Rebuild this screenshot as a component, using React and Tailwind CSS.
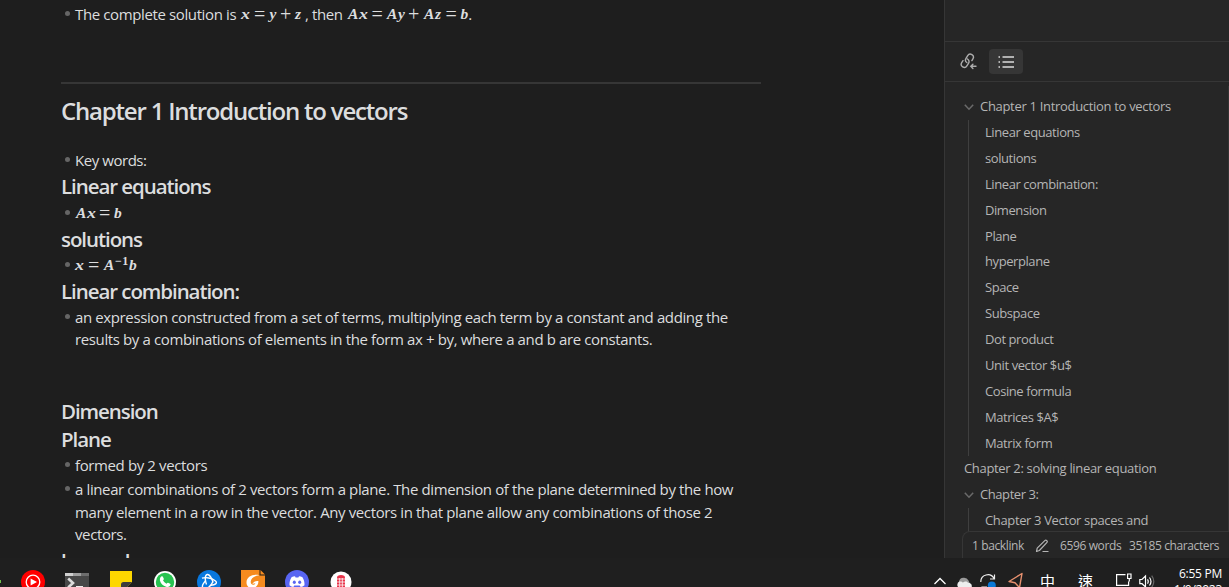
import React from "react";

const outline = [
  "Linear equations", "solutions", "Linear combination:", "Dimension", "Plane", "hyperplane", "Space",
  "Subspace", "Dot product", "Unit vector $u$", "Cosine formula", "Matrices $A$", "Matrix form",
];

function Bullet({ children, className = "" }) {
  return (
    <div className={`flex whitespace-nowrap text-[15px] leading-[22.5px] tracking-[-0.38px] ${className}`}>
      <span className="mt-[8px] ml-[4px] mr-[5px] h-[5px] w-[5px] shrink-0 rounded-full bg-[#666]" />
      <div>{children}</div>
    </div>
  );
}

function V({ children, className = "" }) {
  return (
    <span className={`inline-block shrink-0 font-['Liberation_Serif',serif] text-[15.5px] font-bold italic leading-[22.5px] tracking-normal ${className}`}>
      {children}
    </span>
  );
}

function X({ className = "" }) {
  return <V className={className}><span className="inline-block origin-left scale-x-115">x</span></V>;
}

function Op({ children, className = "" }) {
  return (
    <span className={`inline-block shrink-0 font-['Liberation_Serif',serif] text-[20px] leading-[22.5px] tracking-normal ${className}`}>
      {children}
    </span>
  );
}

function H({ children, className = "h-[30px] leading-[28px]" }) {
  return <h3 className={`whitespace-nowrap text-[20.5px] font-semibold tracking-[-1.07px] ${className}`}>{children}</h3>;
}

function Chevron() {
  return (
    <svg className="mr-[6px] h-[10px] w-[10px] shrink-0" viewBox="0 0 10 10" fill="none" stroke="#6a6a6a" strokeWidth="1.5">
      <path d="M0.8 2.8 5 7.2 9.2 2.8" />
    </svg>
  );
}

function Row({ children, className = "" }) {
  return <div className={`flex h-[25.88px] shrink-0 items-center whitespace-nowrap ${className}`}>{children}</div>;
}

function AppIcons() {
  const c = "h-6 w-6 shrink-0";
  return (
    <div className="flex gap-5">
      <svg className={c} viewBox="0 0 24 24">
        <circle cx="12" cy="12" r="12" fill="#f00" />
        <circle cx="12" cy="12" r="6.8" fill="none" stroke="#fff" strokeWidth="1.3" />
        <path d="M9.6 8.4 16 12l-6.4 3.6z" fill="#fff" />
      </svg>
      <svg className={c} viewBox="0 0 24 24">
        <path d="M0 3h24v20H0z" fill="#484848" />
        <path d="M0 3h8v3H0z" fill="#d0d0d0" />
        <path d="M8 3h8v3H8z" fill="#a0a0a0" />
        <path d="M16 3h8v3h-8z" fill="#6e6e6e" />
        <path d="M3.2 8.5 8 13l-4.8 4.5" fill="none" stroke="#ddd" strokeWidth="2.6" />
        <path d="M11 16h7v2h-7z" fill="#eee" />
      </svg>
      <svg className={c} viewBox="0 0 24 24">
        <path d="M1 1h22v11l-11 11H1z" fill="#fdd700" />
        <path d="M12 23V14.5q0-2.5 2.5-2.5H23z" fill="#3d3d3d" />
      </svg>
      <svg className={c} viewBox="0 0 24 24">
        <circle cx="12" cy="12" r="11" fill="#fff" />
        <circle cx="12" cy="12" r="9.2" fill="#28c351" />
        <path d="M8.3 6.6c.7-.6 1.4-.4 1.7.3l.8 1.8c.2.5-.2 1-.8 1.6.7 1.5 2 2.7 3.6 3.4.5-.6 1-1.2 1.5-1l2 1c.6.3.5.8.3 1.4-.6 1.8-2.5 2.2-4.3 1.6-3.2-1-5.4-3.2-6.1-6-.4-1.6.2-3.2 1.3-4.1z" fill="#fff" />
      </svg>
      <svg className={c} viewBox="0 0 24 24">
        <circle cx="12" cy="12" r="12" fill="#0878df" />
        <g fill="none" stroke="#fff" strokeWidth="1.4" strokeLinejoin="round">
          <path d="M9.5 14.5C7.5 10 8 5 10.2 4.5c2-.3 4.5 3.5 5.8 8" />
          <path d="M5 8.2c4-1.3 10-.2 13.5 2.8 2.5 2.3-.5 4-4.5 4.2" />
          <path d="M7.3 19c2.2 1 6.7-3 8.7-7.5M5.8 17.5c-1.3-1.8.7-4.5 3.2-7" />
        </g>
      </svg>
      <svg className={c} viewBox="0 0 24 24">
        <path d="M0 0h24v24H0z" fill="#f68b1f" />
        <path d="M18.5 0H24v5.5h-5.5z" fill="#1b1b1b" />
        <path d="M19.5 0v4.5H24z" fill="#f68b1f" />
        <path d="M18.3 5.2C12 3.6 5.5 6.5 5.5 12.6c0 5.7 6.5 7.4 10 3.7 1.6-1.7 1.9-3.5 1.9-5.3-3 0-5 .7-6 3 1.2-.6 2-.8 3-.8-.8 2.2-4.7 2.6-4.7-1.4 0-3.6 4-6 8.6-6.6z" fill="#fff" />
      </svg>
      <svg className={c} viewBox="0 0 24 24">
        <circle cx="12" cy="12" r="12" fill="#5865f2" />
        <path d="M8.3 6.6 10 6.3l.6 1.1h2.8l.6-1.1 1.7.3c1 .2 1.7.6 1.7.6 1.5 2.3 2.3 5 2.1 8-1.2 1-2.5 1.5-3.8 1.8l-1-1.5H9.3l-1 1.5c-1.3-.3-2.6-.8-3.8-1.8-.2-3 .6-5.7 2.1-8 0 0 .7-.4 1.7-.6z" fill="#fff" />
        <ellipse cx="9.3" cy="12.2" rx="1.5" ry="1.7" fill="#5865f2" />
        <ellipse cx="14.7" cy="12.2" rx="1.5" ry="1.7" fill="#5865f2" />
      </svg>
      <svg className={c} viewBox="0 0 24 24">
        <circle cx="12" cy="12" r="10.5" fill="#fff" />
        <path d="M8 7.5Q8 5 12 5t4 2.5V20H8z" fill="#e8334a" />
        <path d="M8 9h8M8 12h8M8 15h8M10.7 8v12M13.3 8v12" stroke="#fff" strokeWidth=".8" />
      </svg>
    </div>
  );
}

function Tray() {
  return (
    <div className="flex text-white">
      <svg className="mt-[19px] h-[8px] w-[12px]" viewBox="0 0 12 8" fill="none" stroke="#fff" strokeWidth="1.3"><path d="M.5 7 6 1.5 11.5 7" /></svg>
      <svg className="mt-[18px] ml-[10px] h-[12px] w-[16px]" viewBox="0 0 16 12">
        <path d="M3 5.5a5 4.5 0 0 1 9.5-1L14 8H2z" fill="#9a9a9a" />
        <path d="M3.5 12a3.5 3.5 0 0 1 0-6.5c1.5-.3 2.5.3 3.5 1 1.5-1.5 4-1.5 5 .3 2-.2 3.8 1.2 3.8 3V12z" fill="#eee" />
      </svg>
      <svg className="mt-[16px] ml-[8px] h-[16px] w-[17px]" viewBox="0 0 17 16" fill="none" stroke="#eee" strokeWidth="1.2">
        <path d="M.8 8A7 7 0 0 1 14 4.5M14.5.5v4.5H10M2 16v-3h5" />
        <circle cx="11.8" cy="11.5" r="4" fill="#0a78d6" stroke="none" />
      </svg>
      <svg className="mt-[14px] ml-[11px] h-[17px] w-[16px]" viewBox="0 0 16 17" fill="none" stroke="#e8916f" strokeWidth="1.4" strokeLinejoin="round"><path d="M14 1.5 1 9.5l6 1.2 4.5 5z" /></svg>
      <span className="mt-[13px] ml-[16px] w-[16px] font-['Noto_Sans_CJK_TC',sans-serif] text-[15px] leading-[20px]">中</span>
      <span className="mt-[13px] ml-[22px] w-[16px] font-['Noto_Sans_CJK_TC',sans-serif] text-[15px] leading-[20px]">速</span>
      <svg className="mt-[15px] ml-[21px] h-[16px] w-[17px]" viewBox="0 0 17 16" fill="none" stroke="#fff" strokeWidth="1.2">
        <path d="M10.5 1.6H1.6v10.8h12V8.5M4 14.5h7M12.6 1h3.4v4.5h-3.4zM14.3 5.5v3" />
      </svg>
      <svg className="mt-[16px] ml-[7px] h-[16px] w-[16px]" viewBox="0 0 16 16" fill="none" stroke="#fff" strokeWidth="1.2">
        <path d="M.8 5.5H3L6.5 2v11L3 9.7H.8zM8.5 5.3q1.5 2.2 0 4.4M10.5 3.5q3 4 0 8" />
        <path d="M12.7 1.7q4.2 5.8 0 11.6" stroke="#666" />
      </svg>
      <div className="ml-[16px] w-[58px] pt-[8px] pr-[7px] text-right text-[12px] leading-[16px] tracking-[-0.25px] whitespace-nowrap">
        <div>6:55 PM</div>
        <div>1/9/2023</div>
      </div>
    </div>
  );
}

export default function App() {
  return (
    <div className="flex h-[587px] w-[1229px] flex-col overflow-hidden bg-[#1e1e1e] font-['Open_Sans','Noto_Sans_CJK_TC',sans-serif] text-[#dcddde]">
      <div className="flex h-[558px] shrink-0 overflow-hidden">
        <main className="w-[944px] shrink-0 overflow-hidden pl-[61px]">
          <Bullet className="h-[78px] pt-[3px]">
            <div className="flex">
              <span className="w-[166px]">The complete solution is</span>
              <X className="w-[13px]" /><Op className="w-[15.5px]">=</Op><V className="w-[10.5px]">y</V><Op className="w-[15px]">+</Op><V className="w-[10px]">z</V>
              <span className="w-[43px]">, then</span>
              <V className="w-[11px]">A</V><X className="w-[12.5px]" /><Op className="w-[15.5px]">=</Op>
              <V className="w-[11px]">A</V><V className="w-[10px]">y</V><Op className="w-[16px]">+</Op>
              <V className="w-[11px]">A</V><V className="w-[10.5px]">z</V><Op className="w-[15px]">=</Op>
              <V>b</V><span>.</span>
            </div>
          </Bullet>
          <hr className="mt-[4px] w-[700px] border-t-2 border-[#363636]" />
          <h2 className="mt-[11px] text-[24px] font-semibold leading-[32px] tracking-[-1.2px]">Chapter 1 Introduction to vectors</h2>
          <Bullet className="mt-[22px] tracking-[-0.45px]">Key words:</Bullet>
          <H>Linear equations</H>
          <Bullet><div className="flex pl-[1px]"><V className="w-[11px]">A</V><X className="w-[12px]" /><Op className="w-[15px]">=</Op><V>b</V></div></Bullet>
          <H className="h-[30px] leading-[30px]">solutions</H>
          <Bullet>
            <div className="flex">
              <X className="w-[13px]" /><Op className="w-[16px]">=</Op><V className="w-[11px]">A</V>
              <span className="mt-[-4px] w-[14px] font-['Liberation_Serif',serif] text-[12px] font-bold tracking-[0.3px]">−1</span><V>b</V>
            </div>
          </Bullet>
          <H className="h-[29px] leading-[28px]">Linear combination:</H>
          <Bullet>
            <p>an expression constructed from a set of terms, multiplying each term by a constant and adding the</p>
            <p>results by a combinations of elements in the form ax + by, where a and b are constants.</p>
          </Bullet>
          <H className="mt-[46px] h-[28px] leading-[28px]">Dimension</H>
          <H className="h-[29px] leading-[28px]">Plane</H>
          <Bullet>formed by 2 vectors</Bullet>
          <Bullet className="mt-[2px]">
            <p>a linear combinations of 2 vectors form a plane. The dimension of the plane determined by the how</p>
            <p>many element in a row in the vector. Any vectors in that plane allow any combinations of those 2</p>
            <p>vectors.</p>
          </Bullet>
          <H className="h-[30px] leading-[30px]">hyperplane</H>
        </main>
        <aside className="relative flex w-[285px] flex-col border-l border-[#363636] bg-[#262626] text-[13px] tracking-[-0.42px] text-[#b5b5b5]">
          <div className="h-[42px] shrink-0 border-b border-[#363636]" />
          <div className="flex h-[40px] shrink-0 items-center border-b border-[#363636] pl-[15px]">
            <svg className="h-[17px] w-[17px]" viewBox="0 0 17 17" fill="none" stroke="#adadad" strokeWidth="1.4" strokeLinecap="round">
              <path d="M6.8 9.5A3 3 0 0 1 6 5.4l1.7-2.7a3 3 0 0 1 5.2 3.2l-1 1.7" />
              <path d="M7.2 5.9a3 3 0 0 1 1.4 4.3l-1.7 2.7a3 3 0 0 1-5.2-3.2L3 7.7" />
              <path d="M16 13.3h-5M12.9 11.2 10.8 13.3l2.1 2.1" />
            </svg>
            <div className="ml-[12px] flex h-[25px] w-[34px] items-center justify-center rounded bg-[#363636]">
              <svg className="h-[14px] w-[16px]" viewBox="0 0 16 14" stroke="#dadada" strokeWidth="1.3">
                <path d="M4.5 2H16M4.5 7H16M4.5 12H16M.5 2H2M.5 7H2M.5 12H2" />
              </svg>
            </div>
          </div>
          <div className="flex flex-1 flex-col overflow-hidden pt-[12px] pl-[19px]">
            <Row className="tracking-[-0.31px]"><Chevron />Chapter 1 Introduction to vectors</Row>
            <div className="ml-[4px] shrink-0 border-l border-[#3f3f3f] pl-[16px]">
              {outline.map((t) => <Row key={t}>{t}</Row>)}
            </div>
            <Row className="tracking-[-0.33px]">Chapter 2: solving linear equation</Row>
            <Row><Chevron />Chapter 3:</Row>
            <div className="ml-[4px] shrink-0 border-l border-[#3f3f3f] pl-[16px]">
              <Row className="tracking-[-0.36px]">Chapter 3 Vector spaces and</Row>
            </div>
          </div>
          <div className="absolute top-[86px] right-0 h-[445px] w-px bg-[#333]" />
          <div className="absolute right-0 bottom-0 flex h-[27px] w-[267px] items-center rounded-tl-lg border-t border-l border-[#363636] bg-[#262626] pt-[2px] pl-[9px] text-[12px] tracking-[-0.38px] whitespace-nowrap">
            <span className="w-[63px]">1 backlink</span>
            <svg className="h-[14px] w-[14px]" viewBox="0 0 14 14" fill="none" stroke="#b5b5b5" strokeWidth="1.2" strokeLinejoin="round">
              <path d="M1.5 12.5 2.2 9.2 9.8 1.6a1.3 1.3 0 0 1 2 2L4.4 11.5zM7.5 12.5H13.5" />
            </svg>
            <span className="ml-[11px] w-[69px]">6596 words</span>
            <span>35185 characters</span>
          </div>
        </aside>
      </div>
      <footer className="flex h-[29px] shrink-0 justify-between overflow-hidden bg-[#1f1f1f]">
        <div className="flex pt-[12px]">
          <span className="mt-[10px] mr-[20px] h-[3px] w-px bg-[#6cc04a]" />
          <AppIcons />
        </div>
        <Tray />
      </footer>
    </div>
  );
}
